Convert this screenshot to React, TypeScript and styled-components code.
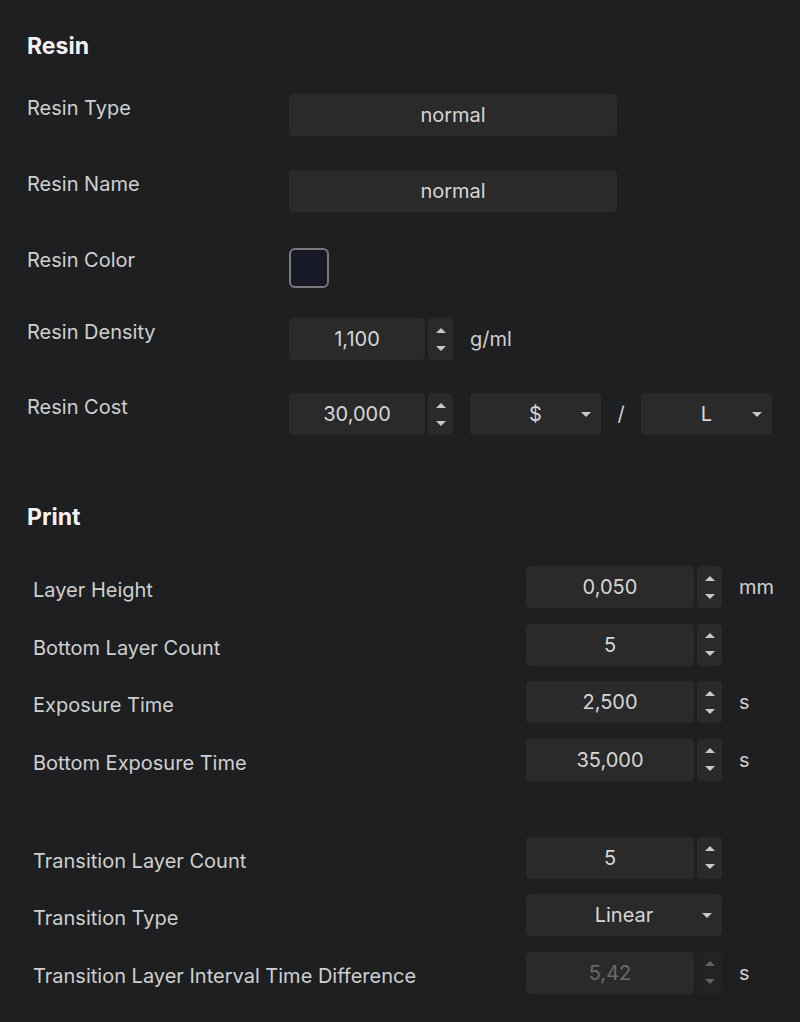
import styled, { createGlobalStyle } from "styled-components";

const Global = createGlobalStyle`
  body {
    margin: 0;
    background: #1e1f21;
    font-family: Inter, "Noto Sans", sans-serif;
    color: #cfcfcf;
  }
`;

const Page = styled.div`
  padding: 28px 0 0 27px;
  height: 994px;
  box-sizing: border-box;
  overflow: hidden;
`;

const Title = styled.h2`
  margin: 0 0 30px;
  font-size: 23px;
  font-weight: 700;
  color: #f2f2f2;
  line-height: 36px;
`;

const ResinRow = styled.div`
  display: flex;
  align-items: flex-start;
  height: 42px;
  margin-bottom: 34px;
`;

const ResinLabel = styled.div`
  width: 262px;
  font-size: 20px;
  line-height: 28px;
  margin-top: 0px;
`;

const Field = styled.div<{ w: number; disabled?: boolean }>`
  width: ${({ w }) => w}px;
  height: 42px;
  background: #2a2a2b;
  border-radius: 4px;
  display: flex;
  align-items: center;
  justify-content: center;
  font-size: 20px;
  color: ${({ disabled }) => (disabled ? "#6a6a6a" : "#d6d6d6")};
  position: relative;
`;

const Swatch = styled.div`
  width: 36px;
  height: 36px;
  margin-top: 2px;
  border: 2px solid #7a7a7c;
  border-radius: 6px;
  background: #171a26;
`;

const Spin = styled.div<{ disabled?: boolean }>`
  width: 25px;
  height: 42px;
  margin-left: 3px;
  background: #2a2a2b;
  border-radius: 4px;
  display: flex;
  flex-direction: column;
  align-items: center;
  justify-content: center;
  gap: 13px;
  opacity: ${({ disabled }) => (disabled ? 0.4 : 1)};
`;

const Tri = styled.div<{ up?: boolean }>`
  width: 0;
  height: 0;
  border-left: 5px solid transparent;
  border-right: 5px solid transparent;
  ${({ up }) =>
    up ? "border-bottom: 5px solid #c8c8c8;" : "border-top: 5px solid #c8c8c8;"}
`;

const Caret = styled.div`
  position: absolute;
  right: 10px;
  top: 19px;
  border-left: 5px solid transparent;
  border-right: 5px solid transparent;
  border-top: 5px solid #c8c8c8;
`;

const Unit = styled.div`
  margin-left: 17px;
  font-size: 20px;
  line-height: 42px;
`;

const Slash = styled.div`
  width: 40px;
  text-align: center;
  font-size: 20px;
  line-height: 42px;
`;

const PrintList = styled.div`
  padding-left: 6px;
`;

const PrintRow = styled.div<{ gap?: number }>`
  display: flex;
  align-items: center;
  height: 42px;
  margin-bottom: ${({ gap }) => gap ?? 15.5}px;
`;

const PrintLabel = styled.div`
  width: 493px;
  font-size: 20px;
  padding-top: 6px;
`;

const Spinner = ({ disabled }: { disabled?: boolean }) => (
  <Spin disabled={disabled}>
    <Tri up />
    <Tri />
  </Spin>
);

const Select = ({ w, value }: { w: number; value: string }) => (
  <Field w={w}>
    {value}
    <Caret />
  </Field>
);

const printRows: { label: string; value: string; unit?: string; gap?: number }[] = [
  { label: "Layer Height", value: "0,050", unit: "mm" },
  { label: "Bottom Layer Count", value: "5" },
  { label: "Exposure Time", value: "2,500", unit: "s" },
  { label: "Bottom Exposure Time", value: "35,000", unit: "s", gap: 56 },
];

export default function App() {
  return (
    <Page>
      <Global />
      <Title>Resin</Title>
      <ResinRow>
        <ResinLabel>Resin Type</ResinLabel>
        <Field w={328}>normal</Field>
      </ResinRow>
      <ResinRow>
        <ResinLabel>Resin Name</ResinLabel>
        <Field w={328}>normal</Field>
      </ResinRow>
      <ResinRow style={{ marginBottom: 30 }}>
        <ResinLabel>Resin Color</ResinLabel>
        <Swatch />
      </ResinRow>
      <ResinRow style={{ marginBottom: 33 }}>
        <ResinLabel>Resin Density</ResinLabel>
        <Field w={136}>1,100</Field>
        <Spinner />
        <Unit>g/ml</Unit>
      </ResinRow>
      <ResinRow style={{ marginBottom: 64 }}>
        <ResinLabel>Resin Cost</ResinLabel>
        <Field w={136}>30,000</Field>
        <Spinner />
        <div style={{ width: 17 }} />
        <Select w={131} value="$" />
        <Slash>/</Slash>
        <Select w={131} value="L" />
      </ResinRow>
      <Title style={{ marginBottom: 31 }}>Print</Title>
      <PrintList>
        {printRows.map((r) => (
          <PrintRow key={r.label} gap={r.gap}>
            <PrintLabel>{r.label}</PrintLabel>
            <Field w={168}>{r.value}</Field>
            <Spinner />
            {r.unit && <Unit>{r.unit}</Unit>}
          </PrintRow>
        ))}
        <PrintRow>
          <PrintLabel>Transition Layer Count</PrintLabel>
          <Field w={168}>5</Field>
          <Spinner />
        </PrintRow>
        <PrintRow>
          <PrintLabel>Transition Type</PrintLabel>
          <Select w={196} value="Linear" />
        </PrintRow>
        <PrintRow>
          <PrintLabel>Transition Layer Interval Time Difference</PrintLabel>
          <Field w={168} disabled>5,42</Field>
          <Spinner disabled />
          <Unit>s</Unit>
        </PrintRow>
      </PrintList>
    </Page>
  );
}
